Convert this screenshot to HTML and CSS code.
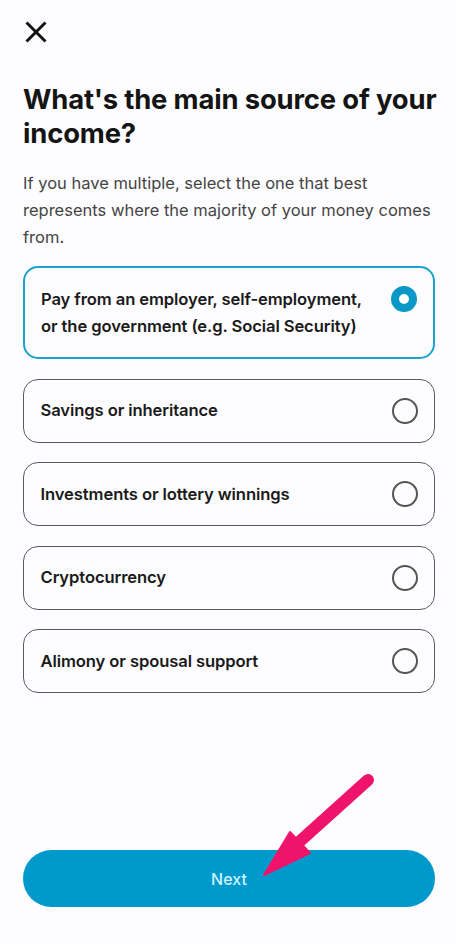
FILE: index.html
```html
<!DOCTYPE html>
<html lang="en">
<head>
<meta charset="utf-8">
<title>Income source</title>
<link rel="stylesheet" href="styles.css">
</head>
<body>
<div class="screen">
  <button class="close" aria-label="Close">
    <svg width="24" height="24" viewBox="0 0 24 24"><path d="M2.5 2.5 L21.5 21.5 M21.5 2.5 L2.5 21.5" stroke="#141414" stroke-width="3" stroke-linecap="butt" fill="none"/></svg>
  </button>
  <h1 class="title">What's the main source of your income?</h1>
  <p class="subtitle">If you have multiple, select the one that best represents where the majority of your money comes from.</p>
  <div class="options">
    <div class="option selected">
      <span class="label">Pay from an employer, self-employment, or the government (e.g. Social Security)</span>
      <span class="radio"></span>
    </div>
    <div class="option">
      <span class="label">Savings or inheritance</span>
      <span class="radio"></span>
    </div>
    <div class="option">
      <span class="label">Investments or lottery winnings</span>
      <span class="radio"></span>
    </div>
    <div class="option">
      <span class="label">Cryptocurrency</span>
      <span class="radio"></span>
    </div>
    <div class="option">
      <span class="label">Alimony or spousal support</span>
      <span class="radio"></span>
    </div>
  </div>
  <button class="next">Next</button>
  <svg class="pointer" width="456" height="944" viewBox="0 0 456 944">
    <line x1="368" y1="780" x2="298" y2="843" stroke="#f0136c" stroke-width="12" stroke-linecap="round"/>
    <polygon points="264,875 290,832 310,853" fill="#f0136c" stroke="#f0136c" stroke-width="2" stroke-linejoin="round"/>
  </svg>
</div>
</body>
</html>
```

FILE: styles.css
```css
* { box-sizing: border-box; }
html, body { margin: 0; padding: 0; background: #fdfcfe; }
body {
  font-family: Inter, "Noto Sans", "Liberation Sans", sans-serif;
  color: #141414;
}
.screen {
  position: relative;
  width: 456px;
  height: 944px;
  padding: 20px 21px 37px 23px;
  display: flex;
  flex-direction: column;
}
.close {
  width: 24px;
  height: 24px;
  padding: 0;
  margin: 0 0 0 1px;
  border: 0;
  background: none;
  display: block;
}
.close svg { display: block; }
.title {
  margin: 38px -18px 0 0;
  font-size: 27.4px;
  line-height: 34px;
  font-weight: 700;
  letter-spacing: -0.15px;
  color: #141414;
}
.subtitle {
  margin: 20px 0 0 0;
  font-size: 16.5px;
  line-height: 27px;
  color: #444;
  letter-spacing: 0;
}
.options {
  margin-top: 15px;
  display: flex;
  flex-direction: column;
  gap: 19.5px;
}
.option {
  display: flex;
  align-items: flex-start;
  justify-content: space-between;
  border: 1.5px solid #5a5a5a;
  border-radius: 15px;
  padding: 17.5px 16px 17.5px 16.5px;
  background: #fdfcfe;
}
.option.selected {
  border: 2px solid #1aa3cc;
  padding: 17.5px 16px 17.5px 16px;
}
.label {
  font-size: 16.6px;
  line-height: 27px;
  font-weight: 600;
  color: #1a1a1a;
  letter-spacing: -0.1px;
  max-width: 330px;
}
.radio {
  flex: none;
  width: 26px;
  height: 26px;
  margin-top: 0.5px;
  border: 2px solid #555;
  border-radius: 50%;
}
.selected .radio {
  border: 8px solid #0b98c7;
  background: #fff;
}
.next {
  margin-top: auto;
  height: 57px;
  width: 412px;
  border: 0;
  border-radius: 29px;
  background: #0099cc;
  color: #cdf3ff;
  font-family: Inter, "Noto Sans", "Liberation Sans", sans-serif;
  font-size: 16px;
  font-weight: 500;
}
.pointer {
  position: absolute;
  left: 0;
  top: 0;
  pointer-events: none;
}
```
